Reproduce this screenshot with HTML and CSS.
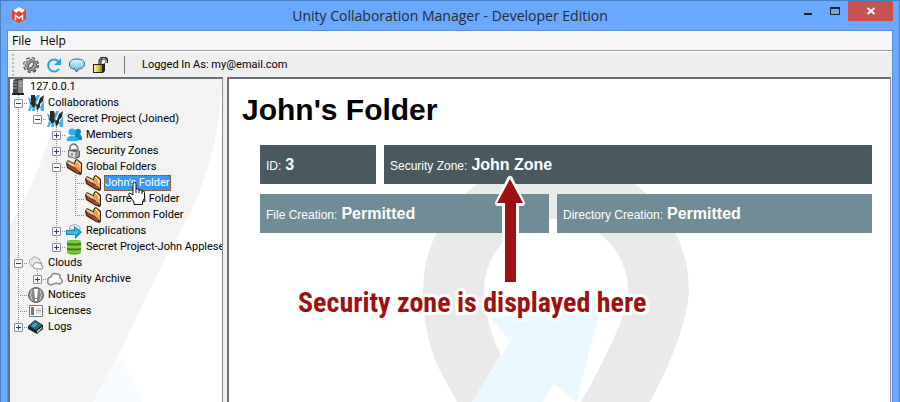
FILE: index.html
```html
<!DOCTYPE html>
<html lang="en">
<head>
<meta charset="utf-8">
<title>Unity Collaboration Manager - Developer Edition</title>
<link rel="stylesheet" href="styles.css">
</head>
<body>
<svg class="defs" aria-hidden="true">
  <defs>
    <linearGradient id="metal" x1="0" x2="1" y1="0" y2="1"><stop offset="0" stop-color="#e6e6e6"/><stop offset="1" stop-color="#666"/></linearGradient>
    <linearGradient id="bubble" x1="0" x2="0" y1="0" y2="1"><stop offset="0" stop-color="#e4f6fd"/><stop offset="1" stop-color="#5cb8e4"/></linearGradient>
    <linearGradient id="gold" x1="0" x2="1"><stop offset="0" stop-color="#fffbb0"/><stop offset=".5" stop-color="#d9cf30"/><stop offset="1" stop-color="#8d8410"/></linearGradient>
    <symbol id="i-collab" viewBox="0 0 16 16">
      <path d="M0 2l4 3-1 5 1 2-2 4H0l2-6z" fill="#3db4f2"/>
      <path d="M9 0h3L8 9l-1 7H4l1-6z" fill="#3db4f2"/>
      <path d="M3 0h4l1 4-1 4 2 1-4 4-3-5 1-1z" fill="#2a2a2a"/>
      <path d="M16 0l-1 6-3 3v3l-3 4-1-6 2-1 2-6z" fill="#2a2a2a"/>
      <path d="M16 5v11h-3l-1-4z" fill="#3db4f2"/>
    </symbol>
    <symbol id="i-folder" viewBox="0 0 16 16">
      <path d="M0 4l2-3 6 3 1-3 2-1 5 4v10l-1 2-4-1L1 9z" fill="#3a2413"/>
      <path d="M1 4l1-2 6 3 1 1-1 3z" fill="#f3c58c"/>
      <path d="M9 4l1-2 1-1 4 4v9l-2-2-5-4z" fill="#e9a54d"/>
      <path d="M10 2l4 3v3" fill="none" stroke="#fff2d0"/>
      <path d="M1 6l12 6v3L2 8z" fill="#8f5b35"/>
      <path d="M2 5l8 4 2 3-9-5z" fill="#b5301e"/>
    </symbol>
  </defs>
</svg>
<div class="window">
  <header class="titlebar">
    <svg class="app-logo" viewBox="0 0 16 16" aria-hidden="true">
      <path d="M8 0l7 3v9l-7 4-7-4V3z" fill="#e8402c"/>
      <path d="M8 0l6 3-3 3-3-2-3 2-3-3z" fill="#fff"/>
      <path d="M4.500 13V8.500L8 11l3.500-2.500V13" fill="none" stroke="#fff" stroke-width="1.500"/>
    </svg>
    <span class="title">Unity Collaboration Manager - Developer Edition</span>
    <div class="window-buttons">
      <button type="button" aria-label="Minimize"><svg viewBox="0 0 12 10"><path d="M2 8h8" stroke="#222" stroke-width="2"/></svg></button>
      <button type="button" aria-label="Maximize"><svg viewBox="0 0 12 10"><path d="M1.500 1.500h9v7h-9z" fill="none" stroke="#222"/><path d="M1 2h10" stroke="#222" stroke-width="2"/></svg></button>
      <button type="button" class="close" aria-label="Close"><svg viewBox="0 0 12 10"><path d="M2.500 2l7 6M9.500 2l-7 6" stroke="#fff" stroke-width="2"/></svg></button>
    </div>
  </header>
  <div class="client">
    <nav class="menubar"><button type="button">File</button><button type="button">Help</button></nav>
    <div class="toolbar">
      <span class="grip"></span>
      <button type="button" aria-label="Settings"><svg viewBox="0 0 16 16"><circle cx="8" cy="8" r="6.500" fill="none" stroke="#444" stroke-width="3" stroke-dasharray="3 2.100"/><circle cx="8" cy="8" r="6" fill="#444"/><circle cx="8" cy="8" r="6" fill="none" stroke="url(#metal)" stroke-width="2" stroke-dasharray="2.700 2"/><circle cx="8" cy="8" r="5" fill="#a5a5a5"/><ellipse cx="8" cy="8" rx="2" ry="3.500" transform="rotate(35 8 8)" fill="#eee" stroke="#444"/></svg></button>
      <button type="button" aria-label="Refresh"><svg viewBox="0 0 16 16"><path d="M13 5a6 6 0 1 0 0 7" fill="none" stroke="#1ea7ec" stroke-width="2"/><path d="M15 1v7H8z" fill="#1ea7ec"/></svg></button>
      <button type="button" aria-label="Messages"><svg viewBox="0 0 16 16"><path d="M8 2c5 0 7.500 2 7.500 5s-3 5-6 5l-2 3-1.500-3C2 12 .500 10 .500 7s2.500-5 7.500-5z" fill="url(#bubble)" stroke="#285f7d"/></svg></button>
      <button type="button" aria-label="Unlock"><svg viewBox="0 0 16 16"><path d="M8 8V4l2-3h3l2 2v3" fill="none" stroke="#222" stroke-width="3"/><path d="M8 7V4l2-2.500h3l1.500 2V6" fill="none" stroke="#aaa"/><path d="M1 7h10l2-1v8l-2 2H1z" fill="#222"/><path d="M2 8h8v7H2z" fill="url(#gold)"/></svg></button>
      <span class="divider"></span>
      <span>Logged In As: my@email.com</span>
    </div>
    <div class="panes">
      <aside class="tree-pane">
        <svg class="watermark" viewBox="0 0 212 323" aria-hidden="true">
          <path d="M53 0H212Q210 92 158 174L109 274 83 323H0V146Q37 88 53 0z" fill="#f3f3f3"/>
          <path d="M109 274l24 49H83z" fill="#f5fbff"/>
        </svg>
        <div class="row root"><svg class="icon" viewBox="0 0 16 16"><path d="M3 2l2-2h8v15H3z" fill="#444"/><path d="M8 1h5v13H8z" fill="#858585"/><path d="M3 3h4M3 6h4M3 9h4" stroke="#aaa"/><path d="M9 4h3M9 7h3" stroke="#ccc"/><path d="M11 2h1v1h-1z" fill="#4c4"/><path d="M2 15h12" stroke="#222" stroke-width="2"/></svg><span class="label">127.0.0.1</span></div>
        <ul class="tree">
          <li>
            <div class="row"><span class="twist"><button type="button" class="minus" aria-label="Collapse Collaborations"></button></span><svg class="icon"><use href="#i-collab"/></svg><span class="label">Collaborations</span></div>
            <ul>
              <li>
                <div class="row"><span class="twist"><button type="button" class="minus" aria-label="Collapse Secret Project"></button></span><svg class="icon"><use href="#i-collab"/></svg><span class="label">Secret Project (Joined)</span></div>
                <ul>
                  <li><div class="row"><span class="twist"><button type="button" aria-label="Expand Members"></button></span><svg class="icon" viewBox="0 0 16 16"><path d="M9 5a3 3 0 1 1 5 2l2 3v3H8z" fill="#1587c4"/><circle cx="6" cy="5" r="3.500" fill="#2db0f0"/><path d="M1 14v-3q2-2 4-2h2q4 1 5 3v2z" fill="#2db0f0"/></svg><span class="label">Members</span></div></li>
                  <li><div class="row"><span class="twist"><button type="button" aria-label="Expand Security Zones"></button></span><svg class="icon" viewBox="0 0 16 16"><path d="M4 8V4q1-3 4-3 4 1 4 6" fill="none" stroke="#777" stroke-width="1.500"/><path d="M2 7l7-1 5 2v6l-4 2-8-2z" fill="#666"/><path d="M3 8l6 1v6l-6-2z" fill="#ddd"/><path d="M9 9l4-1v5l-4 2z" fill="#999"/><path d="M5 10h2v3H5z" fill="#999"/></svg><span class="label">Security Zones</span></div></li>
                  <li>
                    <div class="row"><span class="twist"><button type="button" class="minus" aria-label="Collapse Global Folders"></button></span><svg class="icon"><use href="#i-folder"/></svg><span class="label">Global Folders</span></div>
                    <ul>
                      <li><div class="row selected"><span class="twist"></span><svg class="icon"><use href="#i-folder"/></svg><span class="label">John's Folder</span>
                        <svg class="cursor" viewBox="0 0 17 23" aria-hidden="true"><path d="M5 2q0-1.500 1.500-1.500T8 2v5q3-1 3 1 3-1 3 1 2.500-.500 2.500 1.500V16l-2 4v2.500H6V20l-5-7q-1-2 1-2l3 2z" fill="#fff" stroke="#111"/><path d="M8 7v4M11 8v3M14 9v3" stroke="#111"/></svg></div></li>
                      <li><div class="row"><span class="twist"></span><svg class="icon"><use href="#i-folder"/></svg><span class="label">Garrett's Folder</span></div></li>
                      <li><div class="row"><span class="twist"></span><svg class="icon"><use href="#i-folder"/></svg><span class="label">Common Folder</span></div></li>
                    </ul>
                  </li>
                  <li><div class="row"><span class="twist"><button type="button" aria-label="Expand Replications"></button></span><svg class="icon" viewBox="0 0 16 16"><path d="M3 6q0-4 4-4 3-2 5 1 3 0 2 4z" fill="#eee" stroke="#aaa"/><path d="M0 7h8V3l8 6-7 7v-4H0z" fill="#1684bd"/><path d="M1 8h8V5l5 4-5 4v-2H1z" fill="#45b6e8"/></svg><span class="label">Replications</span></div></li>
                  <li><div class="row"><span class="twist"><button type="button" aria-label="Expand Secret Project-John Applese"></button></span><svg class="icon" viewBox="0 0 16 16"><path d="M1 2q7-2 14 0v12q-7 3-14 0z" fill="#3d7d16"/><path d="M1 2q7-2 14 0v2q-7 1-14 0zM1 6q7 1 14 0v3q-7 1-14 0zM1 11q7 1 14 0v3q-7 1-14 0z" fill="#79cb3c"/></svg><span class="label">Secret Project-John Applese</span></div></li>
                </ul>
              </li>
            </ul>
          </li>
          <li>
            <div class="row"><span class="twist"><button type="button" class="minus" aria-label="Collapse Clouds"></button></span><svg class="icon" viewBox="0 0 16 16"><path d="M2 8Q0 4 4 4q2-4 5-1 3 0 3 3l2 3-4 2H3z" fill="#e8e8e8" stroke="#aaa"/><path d="M6 13q-3-2 0-4 2-3 5-1 3 0 3 3 2 1 0 3H9z" fill="#fafafa" stroke="#888"/></svg><span class="label">Clouds</span></div>
            <ul>
              <li><div class="row"><span class="twist"><button type="button" aria-label="Expand Unity Archive"></button></span><svg class="icon" viewBox="0 0 16 16"><path d="M4 14q-4-1-3-4-1-3 3-4 1-5 6-3 4 0 3 4 4 3 1 5-2 2-5 0z" fill="#fafafa" stroke="#888" stroke-width="1.500"/></svg><span class="label">Unity Archive</span></div></li>
            </ul>
          </li>
          <li><div class="row"><span class="twist"></span><svg class="icon" viewBox="0 0 16 16"><circle cx="8" cy="8" r="7.500" fill="#858585" stroke="#666"/><path d="M4 3q-3 5 0 10M12 3q3 5 0 10" stroke="#ccc" fill="none"/><path d="M6 2h4L9 11H7z" fill="#fff"/><path d="M7 12h2v2H7z" fill="#fff"/></svg><span class="label">Notices</span></div></li>
          <li><div class="row"><span class="twist"></span><svg class="icon" viewBox="0 0 16 16"><path d="M1.500 2.500h13v11h-13z" fill="#fafafa" stroke="#777"/><path d="M3 4h3v3H3z" fill="#e0551c"/><path d="M3 7h3v3H3z" fill="#35a853"/><path d="M3 10h3v2H3z" fill="#2a7de1"/><path d="M8 5h5v6H8z" fill="#ddd"/><path d="M8 7.500h5" stroke="#aaa"/></svg><span class="label">Licenses</span></div></li>
          <li><div class="row"><span class="twist"><button type="button" aria-label="Expand Logs"></button></span><svg class="icon" viewBox="0 0 16 16"><path d="M0 7l7-6 8 5v4l-6 5-9-5z" fill="#14262c"/><path d="M1 7l6-5 7 4-6 5z" fill="#257083"/><path d="M9 12l5-4v1l-5 5z" fill="#eee"/><path d="M4 7l4-3M5 8l4-3" stroke="#7ec3d2"/></svg><span class="label">Logs</span></div></li>
        </ul>
      </aside>
      <main class="detail-pane">
        <svg class="watermark" viewBox="0 0 661 323" aria-hidden="true">
          <path d="M194 212A133 133 0 0 1 460 212Q458 253 421 323H352Q399 240 399 212A72 72 0 0 0 255 212Q257 248 272 276L243 323H228L209 288Q194 253 194 212z" fill="#e9e9e9"/>
          <path d="M261 239Q324 235 377 209L347 323 325 305 314 323H243L282 262z" fill="#e9f8ff"/>
        </svg>
        <h1>John's Folder</h1>
        <dl class="facts">
          <div class="facts-row zone">
            <div class="fact"><dt>ID:</dt> <dd>3</dd></div>
            <div class="fact"><dt>Security Zone:</dt> <dd>John Zone</dd></div>
          </div>
          <div class="facts-row rights">
            <div class="fact"><dt>File Creation:</dt> <dd>Permitted</dd></div>
            <div class="fact"><dt>Directory Creation:</dt> <dd>Permitted</dd></div>
          </div>
        </dl>
        <div class="callout">
          <svg viewBox="0 0 34 112" aria-hidden="true"><path d="M17 4l12 24h-6v79H12V28H5z" fill="#fff" stroke="#fff" stroke-width="6" stroke-linejoin="round"/><path d="M17 4l13 24h-7v79H12V28H4z" fill="#9c1111"/></svg>
          <p>Security zone is displayed here</p>
        </div>
      </main>
    </div>
  </div>
</div>
</body>
</html>
```
FILE: styles.css
```css
* { box-sizing: border-box; }
body {
  margin: 0;
  font: 11px/16px Roboto, sans-serif;
  color: #000;
}
button {
  margin: 0;
  padding: 0;
  border: 0;
  background: none;
  font: inherit;
  color: inherit;
}
svg { display: block; }
ul, dl, dd, p { margin: 0; padding: 0; }
ul { list-style: none; }
.defs { position: absolute; width: 0; height: 0; }

.window {
  display: flex;
  flex-direction: column;
  height: 100vh;
  overflow: hidden;
  background: #6ba8ff;
  border: 1px solid #4b80c4;
  border-bottom: 0;
}
.titlebar {
  display: grid;
  grid-template-columns: 1fr auto 1fr;
  align-items: start;
  height: 29px;
  flex: none;
  padding: 0 6px 0 10px;
}
.app-logo { width: 16px; height: 16px; margin-top: 6px; }
.title {
  margin-right: 4px;
  font: 14px/30px "Open Sans", sans-serif;
  color: #262b35;
}
.window-buttons { display: flex; justify-content: flex-end; }
.window-buttons button {
  display: grid;
  place-items: center;
  width: 27px;
  height: 20px;
}
.window-buttons svg { width: 12px; height: 10px; }
.window-buttons .close { width: 45px; background: #c75050; }

.client {
  display: flex;
  flex-direction: column;
  flex: 1;
  min-height: 0;
  margin: 0 6px;
  border: 1px solid #5a8fd8;
  border-bottom: 0;
  background: #eee;
}
.menubar {
  display: flex;
  gap: 9px;
  flex: none;
  height: 20px;
  padding: 0 4px;
  background: #f5f6f7;
  border-bottom: 1px solid #999;
}
.menubar button { font: 12px/20px "Open Sans", sans-serif; }
.toolbar {
  display: flex;
  align-items: center;
  flex: none;
  height: 26px;
  padding-left: 4px;
  border-top: 1px solid #fff;
}
.toolbar button { width: 16px; height: 16px; margin-right: 7px; }
.toolbar svg { width: 100%; height: 16px; }
.grip {
  width: 2px;
  height: 22px;
  margin-right: 9px;
  background: repeating-linear-gradient(#bbb 0 2px, transparent 2px 4px);
}
.divider { width: 1px; height: 18px; margin: 0 17px 0 9px; background: #777; }

.panes {
  display: grid;
  grid-template-columns: 215px 1fr;
  gap: 4px;
  flex: 1;
  min-height: 0;
}
.tree-pane, .detail-pane {
  position: relative;
  min-width: 0;
  overflow: hidden;
  background: #fff;
  border: 2px solid #6b6e76;
  border-right: 1px solid #8b8e94;
  border-bottom: 0;
}
.detail-pane { margin-right: 1px; }
.watermark { position: absolute; top: 0; left: 0; }
.tree-pane .watermark { width: 212px; height: 323px; }
.detail-pane .watermark { width: 661px; height: 323px; }

.root, .tree { position: relative; }
.row { display: flex; height: 16px; white-space: nowrap; }
.icon { flex: none; width: 16px; height: 16px; }
.label { margin-left: 3px; padding: 0 1px; }
.tree ul { padding-left: 19px; }
.tree li {
  background: repeating-linear-gradient(#888 0 1px, transparent 1px 2px) 8px 0 / 1px 100% no-repeat;
}
.tree li:last-child { background-size: 1px 8px; }
.twist {
  flex: none;
  width: 18px;
  padding: 4px;
  background: repeating-linear-gradient(90deg, #888 0 1px, transparent 1px 2px) 8px 8px / 10px 1px no-repeat;
}
.twist button {
  display: block;
  width: 9px;
  height: 9px;
  border: 1px solid #8e8e8e;
  border-radius: 1px;
  background:
    linear-gradient(#27418f, #27418f) center / 5px 1px no-repeat,
    linear-gradient(#27418f, #27418f) center / 1px 5px no-repeat,
    #f7f7f7;
}
.twist button.minus {
  background: linear-gradient(#27418f, #27418f) center / 5px 1px no-repeat, #f7f7f7;
}
.selected { position: relative; z-index: 1; }
.selected .label {
  color: #fff;
  background: #3399ff;
  outline: 1px dotted #7a4a14;
  outline-offset: -1px;
}
.cursor { position: absolute; left: 61px; top: 7px; width: 17px; height: 23px; }

.detail-pane { padding: 13px 18px 0 13px; font-family: "Liberation Sans", sans-serif; }
h1 { position: relative; margin: 0; font-size: 30px; line-height: 36px; }
.facts {
  position: relative;
  display: grid;
  gap: 10px;
  margin: 17px 0 0 18px;
  color: #fff;
}
.facts-row { display: grid; gap: 8px; }
.zone { grid-template-columns: 116fr 488fr; }
.rights { grid-template-columns: 289fr 315fr; }
.fact {
  display: flex;
  align-items: baseline;
  gap: 4px;
  height: 39px;
  padding: 0 6px;
  font-size: 12px;
  line-height: 40px;
  background: #4a5a60;
}
.rights .fact { background: #708c96; }
dd { font-size: 16px; font-weight: bold; }

.callout { position: absolute; left: 69px; top: 96px; }
.callout svg { width: 34px; height: 112px; margin-left: 195px; }
.callout p {
  font: bold 28px/32px "Roboto Condensed", "Liberation Sans", sans-serif;
  white-space: nowrap;
  color: #9c1111;
  paint-order: stroke fill;
  -webkit-text-stroke: 6px #fff;
}
```
